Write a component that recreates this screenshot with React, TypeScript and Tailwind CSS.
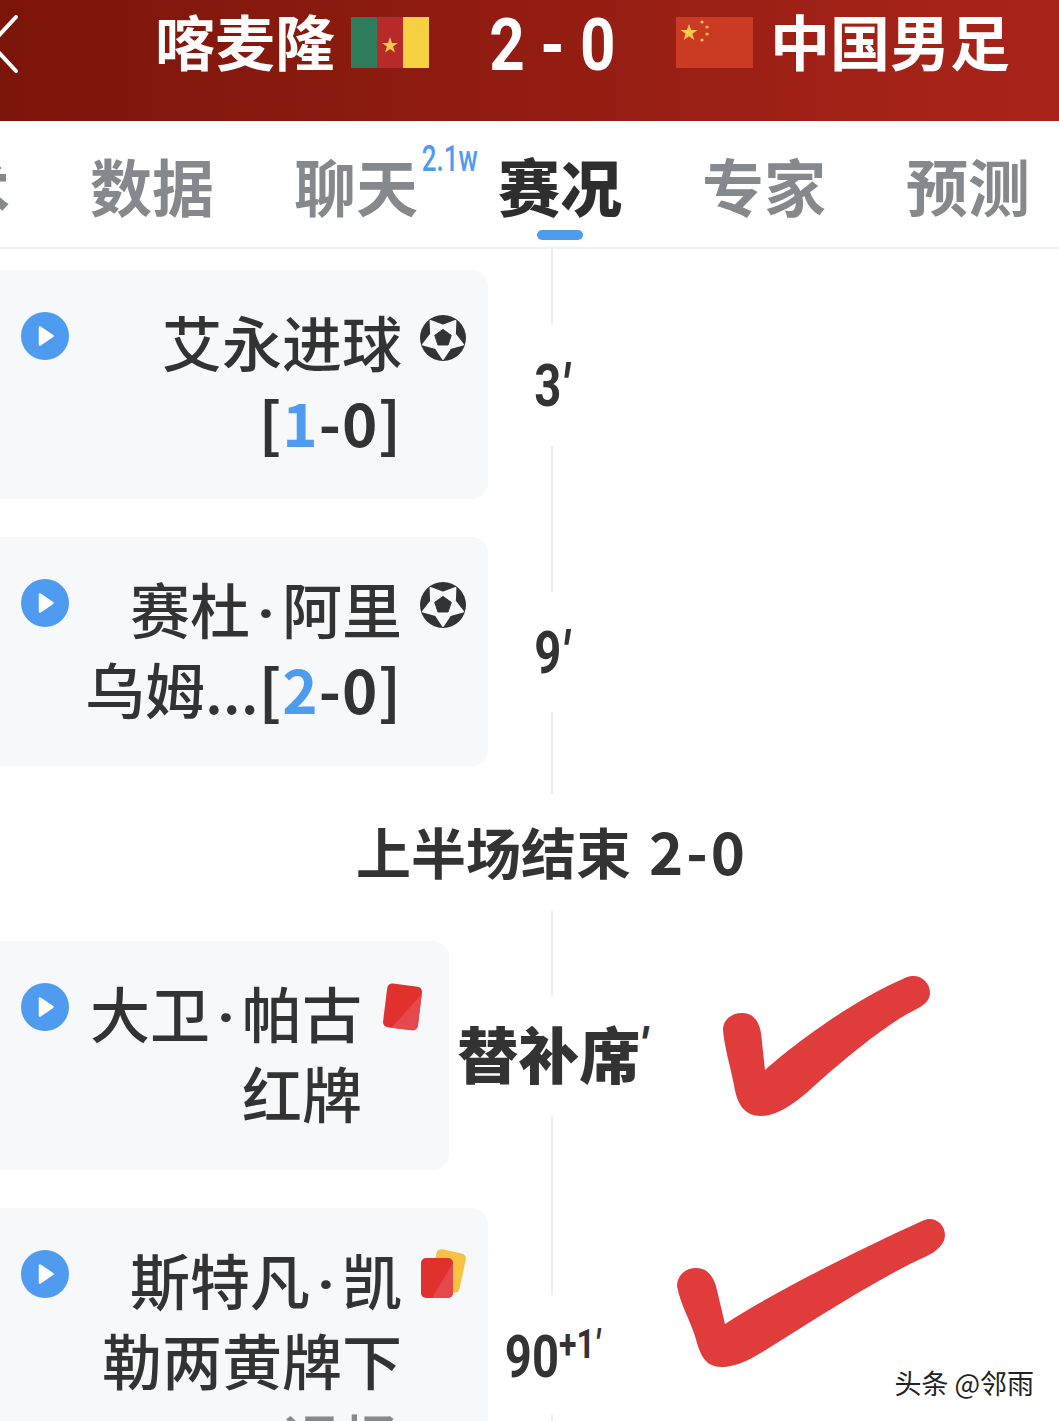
import type { ReactNode } from 'react';

const cjk = "font-['Noto_Sans_CJK_SC','Noto_Sans',sans-serif]";

const tabs = [
  { label: '技术' },
  { label: '数据' },
  { label: '聊天', badge: '2.1w' },
  { label: '赛况', active: true },
  { label: '专家' },
  { label: '预测' },
];

const PlayIcon = () => (
  <svg className="w-12 h-12 shrink-0" viewBox="0 0 48 48">
    <circle cx="24" cy="24" r="24" fill="#4f9bf0" />
    <path d="M19 15.5 L31.5 24 L19 32.5 Z" fill="#fff" stroke="#fff" strokeWidth="2.5" strokeLinejoin="round" />
  </svg>
);

const BallIcon = () => (
  <svg className="w-[46px] h-[46px]" viewBox="0 0 48 48">
    <circle cx="24" cy="24" r="24" fill="#333" />
    <path
      d="M11 6.2 L24 11 L37 6.2 L36.4 20 L44.9 30.8 L31.6 34.5 L24 46 L16.4 34.5 L3.1 30.8 L11.6 20 Z"
      fill="#f6f8fa"
      stroke="#f6f8fa"
      strokeWidth="2"
      strokeLinejoin="round"
    />
    <path d="M24 15 L32.6 21.2 L29.3 31.3 L18.7 31.3 L15.4 21.2 Z" fill="#333" stroke="#333" strokeLinejoin="round" />
  </svg>
);

const RedCard = () => (
  <svg className="w-[42px] h-[50px] -mt-[4px] -mr-[2px] shrink-0" viewBox="0 0 42 50">
    <g transform="rotate(7 21 25)">
      <rect x="3" y="3" width="35" height="44" rx="5" fill="#e0312f" />
      <path d="M38 10 V42 A5 5 0 0 1 33 47 H12 Z" fill="#e5484d" />
    </g>
  </svg>
);

const DoubleCard = () => (
  <svg className="w-[46px] h-[50px] -mt-[4px] shrink-0" viewBox="0 0 46 50">
    <rect x="13" y="2" width="30" height="40" rx="5" fill="#f5c242" transform="rotate(12 28 22)" />
    <rect x="1" y="9" width="32" height="40" rx="5" fill="#e0312f" />
    <path d="M33 14 V44 A5 5 0 0 1 28 49 H12 Z" fill="#e5484d" />
  </svg>
);

// the CJK font's middle dot is full width, Roboto's is not
const Dot = () => (
  <span className="inline-block w-[32px] text-center font-['Roboto',sans-serif] font-bold leading-[0]">·</span>
);

const Score = ({ value }: { value: number }) => (
  <span className="font-bold tracking-[1px]">
    [<span className="text-[#4f9bf0]">{value}</span>-0]
  </span>
);

interface EventCardProps {
  lines: ReactNode[];
  icon: ReactNode;
  narrow?: boolean;
}

const EventCard = ({ lines, icon, narrow }: EventCardProps) => (
  <div
    className={`flex items-start h-[229px] rounded-r-[16px] bg-[#f6f8fa] pl-[21px] pt-[42px] ${
      narrow ? 'w-[449px] pr-[27px]' : 'w-[488px] pr-[22px]'
    }`}
  >
    <PlayIcon />
    <div className="flex-1 -mt-[11px] text-right text-[60px] leading-[80px] font-medium text-[#333] whitespace-nowrap">
      {lines.map((line, i) => (
        <div key={i}>{line}</div>
      ))}
    </div>
    <div className={`shrink-0 flex justify-end mt-[3px] ${narrow ? 'w-[39px] ml-[21px]' : 'w-[46px] ml-[18px]'}`}>
      {icon}
    </div>
  </div>
);

const Line = ({ className = '' }: { className?: string }) => <div className={`w-[2px] bg-[#ececec] ${className}`} />;

// digits in the picture are a condensed DIN, so Roboto gets squeezed
const Minute = ({ children }: { children: ReactNode }) => (
  <span className="inline-block scale-x-[0.8] font-['Roboto',sans-serif] font-bold text-[59px] leading-none text-[#333] whitespace-nowrap">
    {children}
  </span>
);

const Prime = () => <span className="italic">′</span>;

interface RowProps {
  card: ReactNode;
  label: ReactNode;
  pad?: string;
  lead?: string;
  check?: ReactNode;
}

const Row = ({ card, label, pad = 'pb-[38px]', lead = 'h-[55px]', check }: RowProps) => (
  <div className={`relative grid grid-cols-[488px_128px_1fr] ${pad}`}>
    {card}
    <div className="flex flex-col items-center -mb-[38px]">
      <Line className={lead} />
      <div className="h-[120px] w-full flex items-center justify-center">{label}</div>
      <Line className="flex-1" />
    </div>
    {check}
  </div>
);

export default function App() {
  return (
    <div className={`relative w-[1059px] h-[1421px] overflow-hidden bg-white ${cjk}`}>
      {/* Match header */}
      <div className="flex items-start h-[121px] pt-[4px] bg-gradient-to-r from-[#7c1509] to-[#aa241a] text-white">
        <svg className="w-[30px] h-[60px] -ml-[12px] mt-[11px] shrink-0" viewBox="0 0 30 60" fill="none">
          <path d="M28 2 L3 29 L28 56" stroke="#fff" strokeWidth="4" strokeLinecap="round" strokeLinejoin="round" />
        </svg>
        <div className="ml-[137px] -mt-[3px] w-[184px] text-[60px] leading-[78px] font-bold whitespace-nowrap">喀麦隆</div>
        <svg className="ml-[12px] mt-[13px] w-[78px] h-[51px] shrink-0" viewBox="0 0 78 51">
          <rect width="26" height="51" fill="#2f7d5f" />
          <rect x="26" width="26" height="51" fill="#b82a2a" />
          <rect x="52" width="26" height="51" fill="#f5d040" />
          <path d="M39 20 L41 26 L47 26 L42 29.5 L44 35.5 L39 32 L34 35.5 L36 29.5 L31 26 L37 26 Z" fill="#f7c948" />
        </svg>
        <div className="w-[247px] mt-[3px] flex justify-center">
          <span className="inline-block scale-x-[0.86] font-['Roboto',sans-serif] font-bold text-[72px] leading-[78px] whitespace-pre">
            2 - 0
          </span>
        </div>
        <svg className="mt-[13px] w-[77px] h-[51px] shrink-0" viewBox="0 0 77 51">
          <rect width="77" height="51" fill="#cb3a22" />
          <path d="M13 7 L15.2 13 L21.5 13 L16.4 16.8 L18.3 23 L13 19.2 L7.7 23 L9.6 16.8 L4.5 13 L10.8 13 Z" fill="#f7c948" />
          <circle cx="26" cy="5" r="1.6" fill="#f7c948" />
          <circle cx="31" cy="10" r="1.6" fill="#f7c948" />
          <circle cx="31" cy="17" r="1.6" fill="#f7c948" />
          <circle cx="26" cy="23" r="1.6" fill="#f7c948" />
        </svg>
        <div className="ml-[17px] -mt-[3px] text-[60px] leading-[78px] font-bold whitespace-nowrap">中国男足</div>
      </div>

      {/* Tabs */}
      <div className="flex h-[128px] -ml-[154px] w-[1300px] border-b-2 border-[#f0f0f0]">
        {tabs.map((tab) => (
          <div key={tab.label} className="w-[204px] flex flex-col items-center pt-[26px]">
            <span
              className={`relative text-[62px] leading-[76px] whitespace-nowrap ${
                tab.active ? 'font-black text-[#2e2e2e]' : 'font-bold text-[#85888c]'
              }`}
            >
              {tab.label}
              {tab.badge && (
                <span className="absolute left-full top-[-8px] ml-[-7px] scale-x-[0.72] font-['Roboto',sans-serif] text-[36px] leading-[40px] font-medium text-[#4f9bf0]">
                  {tab.badge}
                </span>
              )}
            </span>
            {tab.active && <div className="mt-[7px] w-[46px] h-[10px] rounded-full bg-[#4f9bf0]" />}
          </div>
        ))}
      </div>

      {/* Timeline */}
      <div className="grid grid-cols-[488px_128px_1fr] h-[21px]">
        <div />
        <div className="flex justify-center">
          <Line />
        </div>
      </div>

      <Row
        card={<EventCard lines={['艾永进球', <Score value={1} />]} icon={<BallIcon />} />}
        label={<Minute>3<Prime /></Minute>}
      />
      <Row
        pad="pb-[29px]"
        card={
          <EventCard
            lines={[<>赛杜<Dot />阿里</>, <>乌姆...<Score value={2} /></>]}
            icon={<BallIcon />}
          />
        }
        label={<Minute>9<Prime /></Minute>}
      />

      <div className="relative flex items-center justify-center h-[116px] pl-[45px] pb-[6px] bg-white leading-none font-bold text-[#333] whitespace-nowrap">
        <span className="text-[55px]">上半场结束</span>
        <span className="ml-[18px] tracking-[3px] text-[58px]">2-0</span>
      </div>

      <div className="grid grid-cols-[488px_128px_1fr] h-[30px]">
        <div />
        <div className="flex justify-center">
          <Line />
        </div>
      </div>

      <Row
        card={<EventCard narrow lines={[<>大卫<Dot />帕古</>, '红牌']} icon={<RedCard />} />}
        label={
          <span className="mb-[8px] text-[61px] leading-none font-black text-[#333] whitespace-nowrap">
            替补席<span className="font-['Roboto',sans-serif] italic text-[44px] align-top">′</span>
          </span>
        }
        check={
          <svg className="absolute left-[723px] top-[34px] w-[207px] h-[141px]" viewBox="0 0 207 141">
            <path
              d="M182 3 C195 -3 207 6 207 18 C207 26 200 31 190 36 C165 48 120 85 90 112 C75 126 55 141 38 141 C22 141 14 130 11 110 C7 90 1 70 0 55 C0 45 8 38 19 38 C30 38 36 46 38 58 L42 95 C70 70 130 25 182 3 Z"
              fill="#e03c3c"
            />
          </svg>
        }
      />
      <Row
        lead="h-[87px]"
        card={
          <EventCard
            lines={[<>斯特凡<Dot />凯</>, '勒两黄牌下', <span className="text-[#85888c]">退场</span>]}
            icon={<DoubleCard />}
          />
        }
        label={
          <Minute>
            90<span className="text-[40px] align-[19px]">+1<Prime /></span>
          </Minute>
        }
        check={
          <svg className="absolute left-[677px] top-[10px] w-[268px] h-[149px]" viewBox="0 0 268 149">
            <path
              d="M245 3 C256 -3 268 5 268 17 C268 26 260 33 250 38 C205 58 140 100 95 128 C75 141 60 149 45 149 C28 149 23 137 18 118 C12 100 3 85 0 68 C0 58 8 50 19 50 C30 50 36 58 39 68 L48 106 C100 72 190 28 245 3 Z"
              fill="#e03c3c"
            />
          </svg>
        }
      />

      {/* Watermark */}
      <div className="absolute right-[25px] bottom-[20px] text-[27px] leading-[36px] text-[#222] whitespace-nowrap">
        头条 @邻雨
      </div>
    </div>
  );
}
